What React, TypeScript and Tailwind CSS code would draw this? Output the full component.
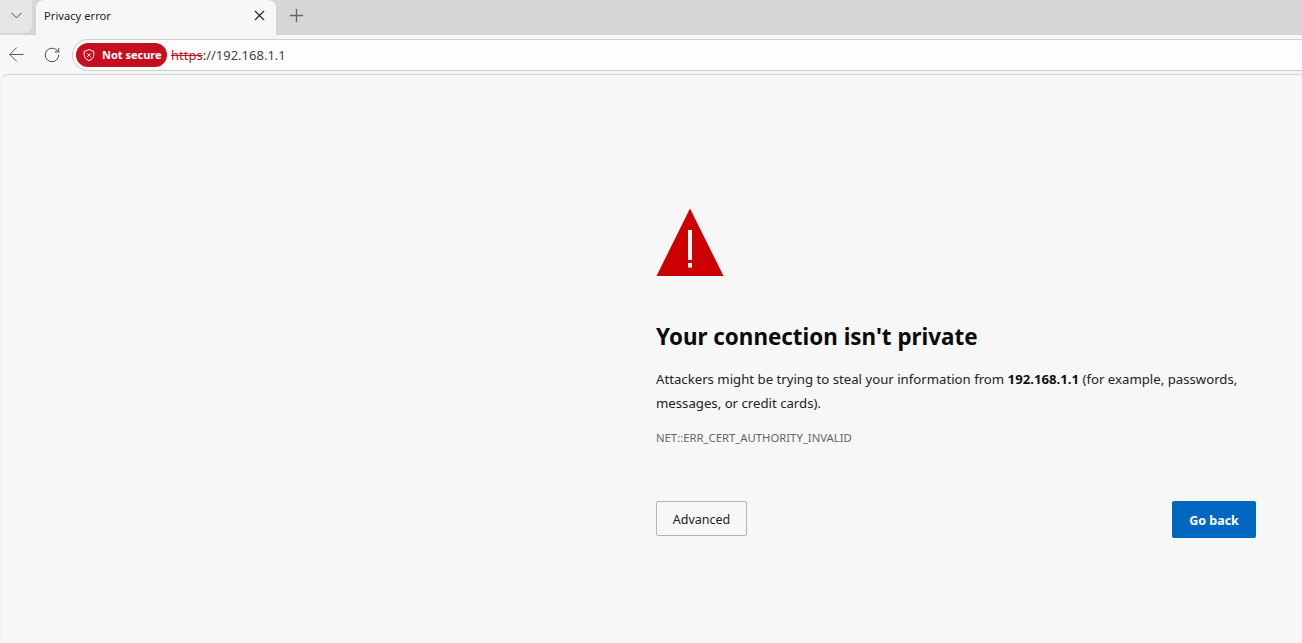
import React from "react";
import { ChevronDown, X, Plus, ArrowLeft, RotateCw } from "lucide-react";

const font = "font-['Noto_Sans','Open_Sans',sans-serif]";

const TabStrip = () => (
  <div className="flex h-[35px] bg-[#d6d6d6] shrink-0">
    <div className="w-[32px] h-[33px] bg-[#e6e6e6] rounded-br-[8px] flex items-center justify-center text-[#444]">
      <ChevronDown size={19} strokeWidth={1.2} className="-mt-[3px]" />
    </div>
    <div className="ml-[4px] w-[240px] h-[35px] bg-[#f7f7f7] rounded-t-[8px] flex items-center pl-[8px] pr-[8px]">
      <span className="flex-1 text-[11.2px] leading-[14px] -mt-[4px] text-[#222]">Privacy error</span>
      <X size={17} strokeWidth={1.5} className="text-[#222] -mt-[5px]" />
    </div>
    <div className="w-[40px] h-[31px] flex items-center justify-center text-[#666]">
      <Plus size={21} strokeWidth={1.5} />
    </div>
  </div>
);

const Toolbar = () => (
  <div className="flex items-center h-[39px] bg-[#f7f7f7] shrink-0">
    <div className="w-[32px] flex justify-center text-[#555]">
      <ArrowLeft size={23} strokeWidth={1} />
    </div>
    <div className="w-[40px] flex justify-center text-[#444]">
      <RotateCw size={18} strokeWidth={1.25} />
    </div>
    <div className="flex-1 h-[32px] bg-[#fdfdfd] border border-r-0 border-[#cfcfcf] rounded-l-[16px] flex items-center pl-[3px]">
      <div className="h-[24px] w-[91px] rounded-full bg-[#c50f1f] flex items-center pl-[6px] text-white shrink-0">
        <svg width="14" height="14" viewBox="0 0 16 16" fill="none" stroke="#fff" strokeWidth="1.1">
          <path d="M8 1.5c1.6 1.3 3.4 2 5.5 2.2v4c0 3.2-2.2 5.400-5.500 6.800-3.300-1.400-5.500-3.600-5.500-6.800v-4C4.600 3.500 6.400 2.800 8 1.500Z" />
          <path d="M6 6.200l4 4M10 6.200l-4 4" />
        </svg>
        <span className="ml-[6px] pt-[1px] text-[11px] font-bold whitespace-nowrap">Not secure</span>
      </div>
      <span className="ml-[4px] text-[13px] text-[#444] whitespace-nowrap translate-y-[1px]">
        <span className="text-[#c50f1f] line-through">https</span>
        <span>://192.168.1.1</span>
      </span>
    </div>
  </div>
);

const WarningIcon = () => (
  <svg width="68" height="69" viewBox="0 0 68 69" className="block">
    <path d="M34 0.500L67.500 68H0.500Z" fill="#cc0000" />
    <rect x="32" y="22" width="4" height="30" fill="#f7f7f7" />
    <rect x="32" y="55" width="4" height="4.500" fill="#f7f7f7" />
  </svg>
);

export default function App() {
  return (
    <div className={`h-[643px] w-full flex flex-col overflow-hidden bg-[#f7f7f7] ${font}`}>
      <TabStrip />
      <Toolbar />
      <main className="flex-1 border-t border-l border-t-[#d4d4d4] border-l-[#f1f1f1] rounded-tl-[8px] bg-[#f7f7f7] pl-[655px] pr-[46px] pt-[133px]">
        <WarningIcon />
        <h1 className="mt-[44px] text-[22.4px] leading-[32px] font-bold text-[#0b0b0b] whitespace-nowrap">
          Your connection isn't private
        </h1>
        <p className="mt-[14px] text-[13.2px] leading-[24px] text-[#222]">
          Attackers might be trying to steal your information from{" "}
          <b className="text-[#111]">192.168.1.1</b> (for example, passwords, messages, or credit cards).
        </p>
        <div className="mt-[16px] text-[11.3px] leading-[14px] text-[#666] whitespace-nowrap">
          NET::ERR_CERT_AUTHORITY_INVALID
        </div>
        <div className="mt-[56px] flex justify-between items-start">
          <button className="w-[91px] h-[35px] pt-[3px] border border-[#b4b4b4] rounded-[2px] text-[12.5px] text-[#222]">
            Advanced
          </button>
          <button className="w-[84px] h-[37px] pt-[3px] bg-[#0067c0] rounded-[2px] text-[12.5px] font-bold text-white">
            Go back
          </button>
        </div>
      </main>
    </div>
  );
}
